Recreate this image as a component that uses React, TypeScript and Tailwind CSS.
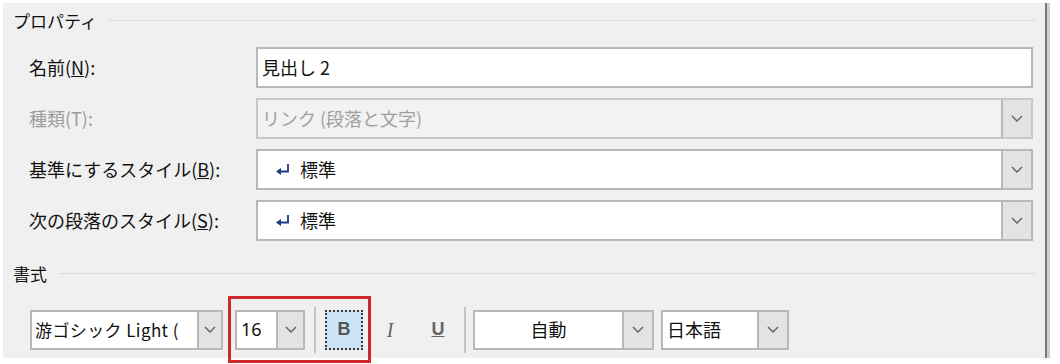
import type { ReactNode } from "react";

const FONT = "font-['Noto_Sans_CJK_JP','Noto_Sans',sans-serif]";

const Chevron = () => (
  <svg width="12" height="7" viewBox="0 0 12 7" fill="none">
    <path d="M1 1l5 5 5-5" stroke="#5f5f5f" strokeWidth="1.4" />
  </svg>
);

const ReturnArrow = () => (
  <svg width="15" height="13" viewBox="0 0 15 13" fill="none">
    <path d="M13 1v7.5H4" stroke="#1b3b86" strokeWidth="1.8" />
    <path d="M1 8.5L6 5v7z" fill="#1b3b86" />
  </svg>
);

const DropButton = ({ className = "" }: { className?: string }) => (
  <div
    className={`flex items-center justify-center self-stretch bg-[#e3e3e3] border-l-2 border-[#b8b8b8] ${className}`}
  >
    <Chevron />
  </div>
);

const GroupHeader = ({ title }: { title: string }) => (
  <div className="flex items-center gap-3 pr-[10px]">
    <span className="text-[17px] leading-none text-[#111]">{title}</span>
    <div className="flex-1 h-px bg-[#dcdcdc]" />
  </div>
);

interface IRowProps {
  label: ReactNode;
  disabled?: boolean;
  children: ReactNode;
}

const Row = ({ label, disabled, children }: IRowProps) => (
  <div className="flex items-center h-[41px]">
    <div className={`w-[227px] text-[18px] ${disabled ? "text-[#9c9c9c]" : "text-[#111]"}`}>
      {label}
    </div>
    {children}
  </div>
);

const StyleValue = () => (
  <div className="flex items-center gap-[10px] pl-[17px] text-[18px] text-[#111]">
    <ReturnArrow />
    <span>標準</span>
  </div>
);

export default function App() {
  return (
    <div className={`w-[1060px] h-[364px] bg-white pt-[3px] pl-[3px] ${FONT}`}>
      <div className="flex w-[1047px] h-[355px]">
        <div className="flex-1 bg-[#f0f0f0] flex flex-col pl-[10px] pt-[9px]">
          <GroupHeader title="プロパティ" />

          <div className="flex flex-col gap-[10px] pl-[16px] mt-[18px]">
            <Row
              label={
                <>
                  名前(<span className="underline">N</span>):
                </>
              }
            >
              <div className="w-[777px] h-full bg-white border-2 border-[#b8b8b8] flex items-center pl-[4px] text-[18px] text-[#111]">
                見出し 2
              </div>
            </Row>

            <Row label="種類(T):" disabled>
              <div className="w-[777px] h-full bg-[#f2f2f2] border-2 border-[#c8c8c8] flex items-center">
                <span className="flex-1 pl-[4px] text-[18px] text-[#a0a0a0]">リンク (段落と文字)</span>
                <DropButton className="w-[30px]" />
              </div>
            </Row>

            <Row
              label={
                <>
                  基準にするスタイル(<span className="underline">B</span>):
                </>
              }
            >
              <div className="w-[777px] h-full bg-white border-2 border-[#b8b8b8] flex items-center">
                <div className="flex-1">
                  <StyleValue />
                </div>
                <DropButton className="w-[30px]" />
              </div>
            </Row>

            <Row
              label={
                <>
                  次の段落のスタイル(<span className="underline">S</span>):
                </>
              }
            >
              <div className="w-[777px] h-full bg-white border-2 border-[#b8b8b8] flex items-center">
                <div className="flex-1">
                  <StyleValue />
                </div>
                <DropButton className="w-[30px]" />
              </div>
            </Row>
          </div>

          <div className="mt-[24px]">
            <GroupHeader title="書式" />
          </div>

          <div className="flex items-center mt-[14px] pl-[17px] h-[67px]">
            {/* font name */}
            <div className="flex items-center w-[193px] h-[40px] bg-white border-2 border-[#b8b8b8]">
              <span className="flex-1 pl-[3px] text-[17px] tracking-[0.4px] text-[#111] whitespace-nowrap overflow-hidden">
                游ゴシック Light (
              </span>
              <DropButton className="w-[24px]" />
            </div>

            {/* highlighted: size + bold */}
            <div className="flex items-center gap-[9px] ml-[5px] h-[67px] border-[3px] border-[#cc2a2e] pl-[4px] pr-[5px]">
              <div className="flex items-center w-[70px] h-[40px] bg-white border-2 border-[#b8b8b8]">
                <span className="flex-1 pl-[4px] text-[18px] text-[#111] font-['Noto_Sans',sans-serif]">16</span>
                <DropButton className="w-[27px]" />
              </div>
              <div className="w-[2px] h-[46px] bg-[#c4c4c4]" />
              <div className="w-[38px] h-[40px] bg-[#cce4f7] border-2 border-dotted border-[#3a3a3a] flex items-center justify-center">
                <span className="text-[18px] font-bold text-[#555] font-['Liberation_Sans',sans-serif]">B</span>
              </div>
            </div>

            <div className="w-[34px] text-center text-[20px] italic text-[#666] font-['Liberation_Serif',serif] ml-[2px]">
              I
            </div>
            <div className="w-[34px] text-center text-[18px] font-bold text-[#666] underline font-['Liberation_Sans',sans-serif] ml-[14px]">
              U
            </div>
            <div className="w-[2px] h-[46px] bg-[#c4c4c4] ml-[9px]" />

            <div className="flex items-center w-[181px] h-[40px] bg-white border-2 border-[#b8b8b8] ml-[7px]">
              <span className="flex-1 text-center text-[18px] text-[#111]">自動</span>
              <DropButton className="w-[30px]" />
            </div>

            <div className="flex items-center w-[128px] h-[40px] bg-white border-2 border-[#b8b8b8] ml-[7px]">
              <span className="flex-1 pl-[4px] text-[18px] text-[#111]">日本語</span>
              <DropButton className="w-[30px]" />
            </div>
          </div>
        </div>
        <div className="w-[2px] bg-[#7a7a7a]" />
        <div className="w-[3px] bg-[#cfcfcf]" />
      </div>
    </div>
  );
}
